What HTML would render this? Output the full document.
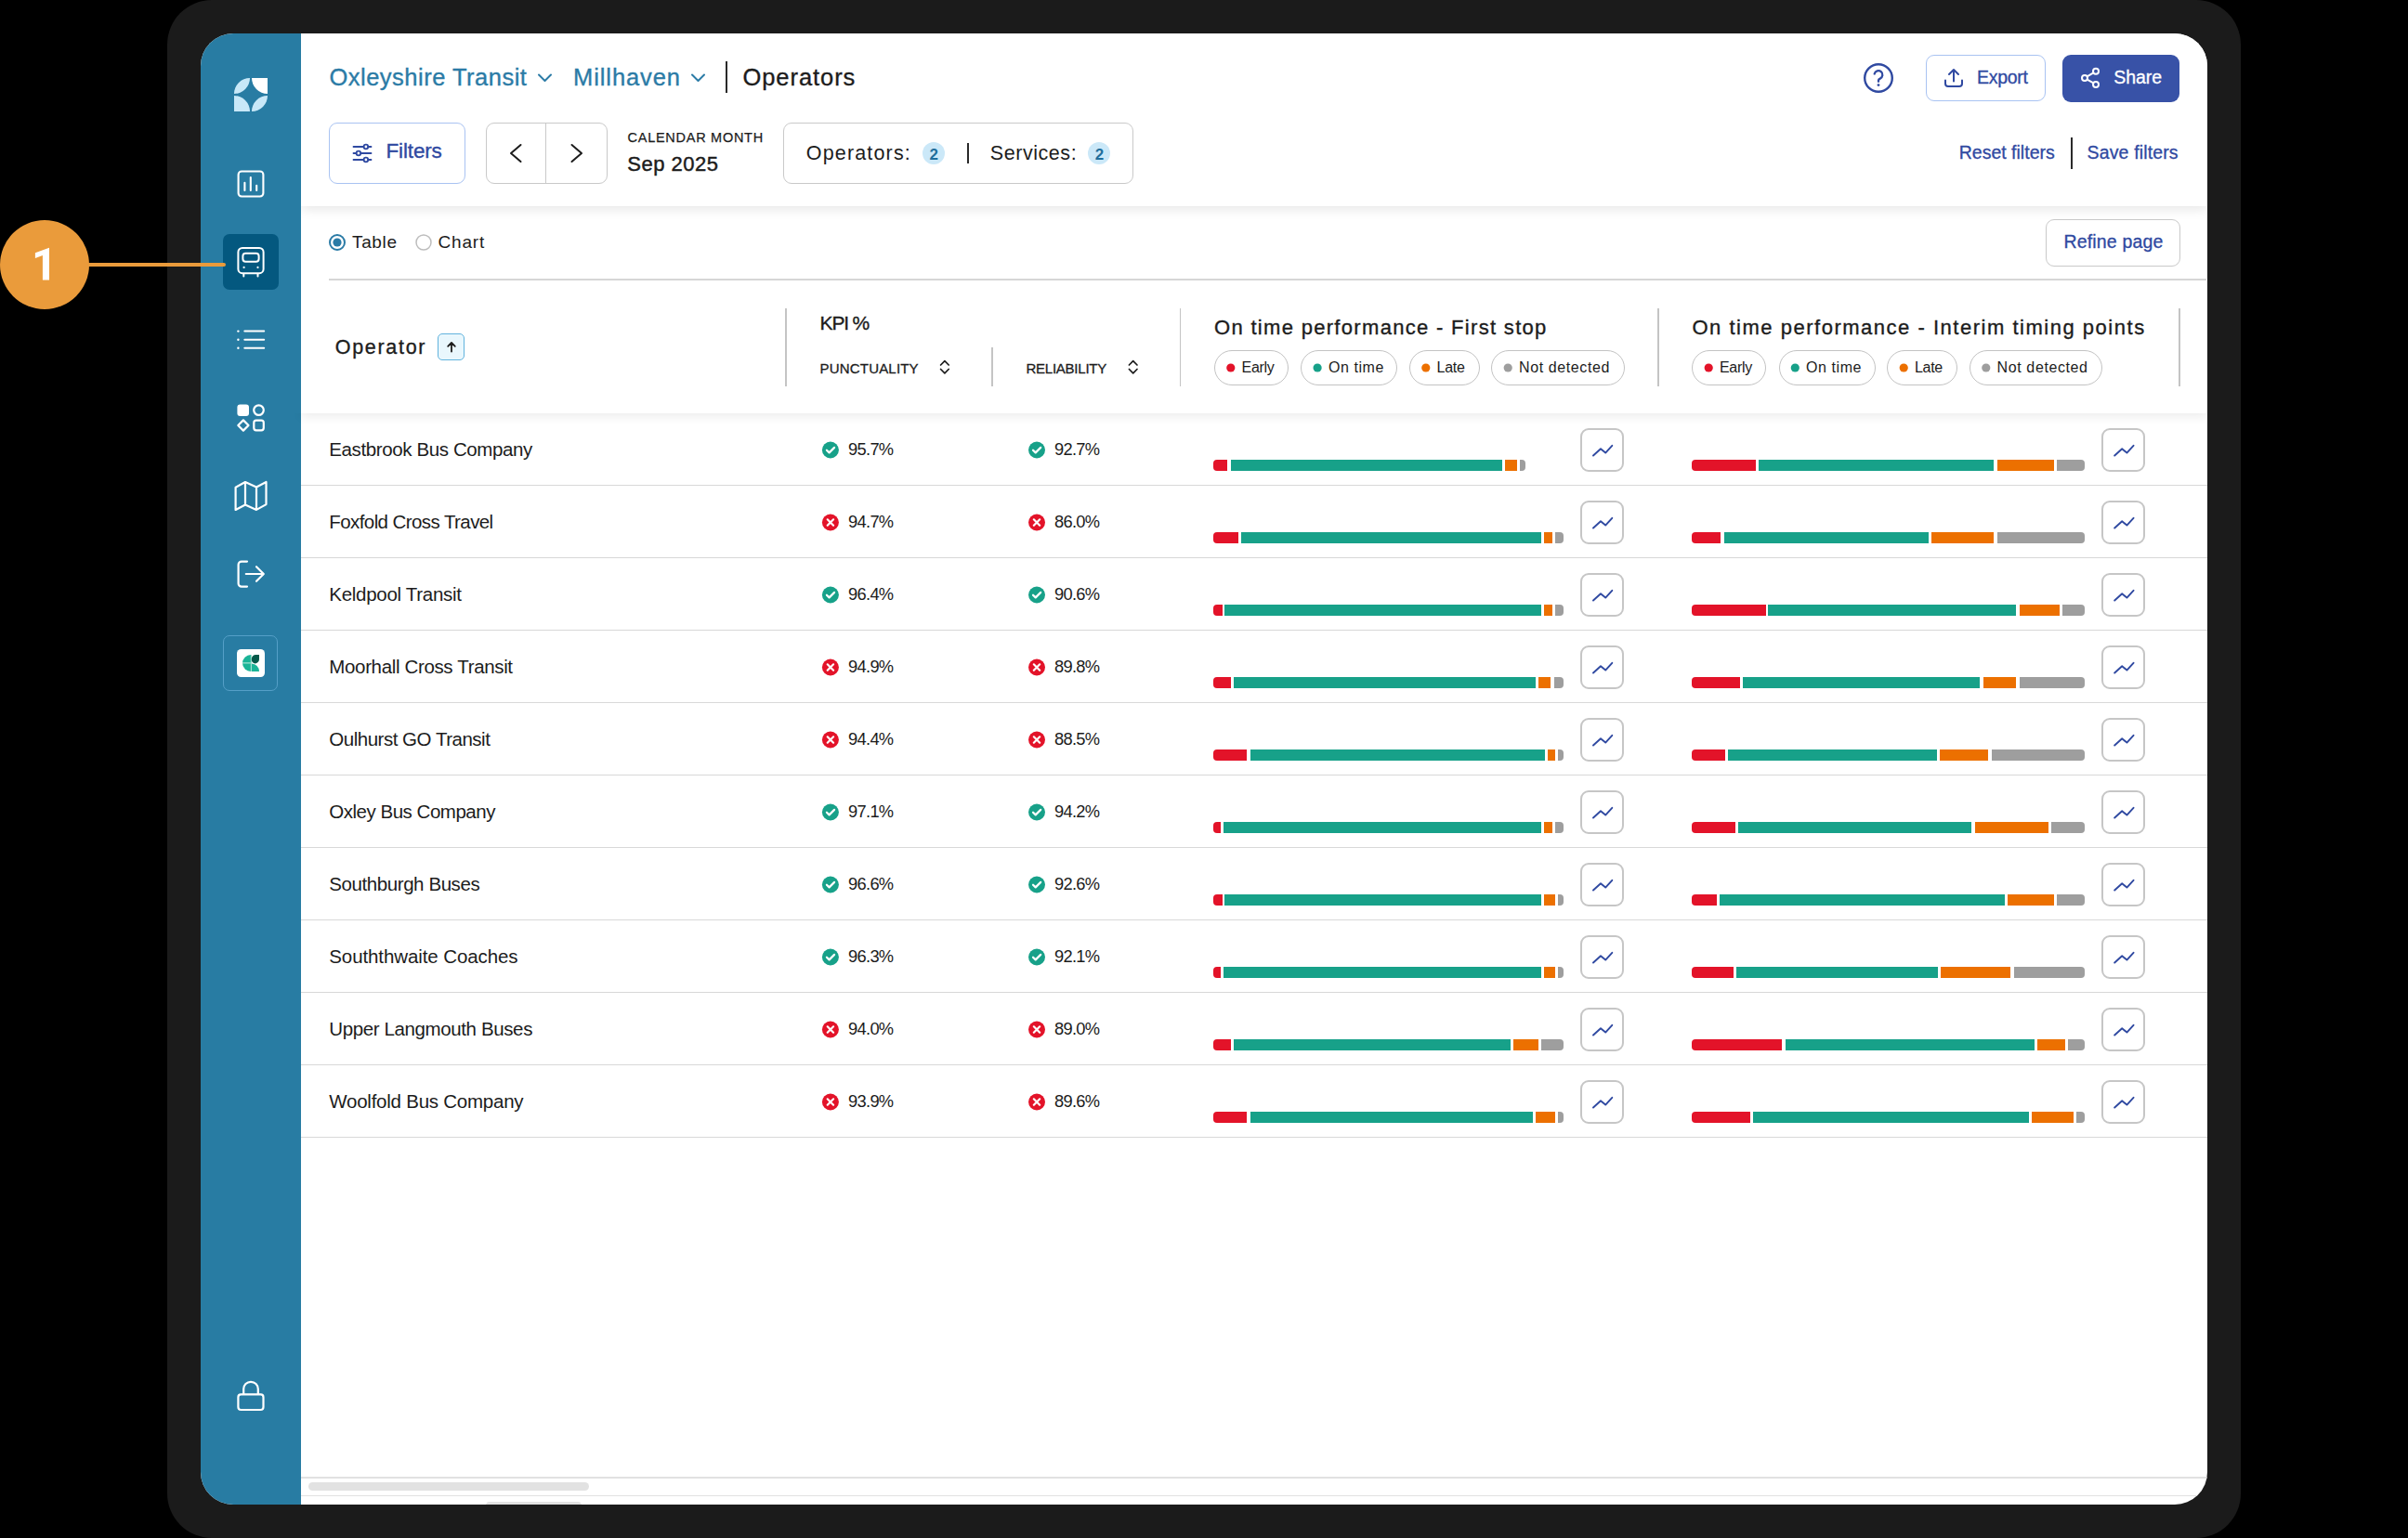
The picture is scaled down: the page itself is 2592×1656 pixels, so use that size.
<!DOCTYPE html><html><head><meta charset="utf-8"><title>Operators</title><style>
html,body{margin:0;padding:0;background:#000;}
body{width:2592px;height:1656px;overflow:hidden;position:relative;font-family:"Liberation Sans",sans-serif;}
.abs{position:absolute;}
.t{position:absolute;white-space:nowrap;font-family:"Liberation Sans",sans-serif;}
.b{position:absolute;}
#frame{position:absolute;left:180px;top:0;width:2232px;height:1656px;background:#1b1b1b;border-radius:48px;}
#screen{position:absolute;left:216px;top:36px;width:2160px;height:1584px;background:#fff;border-radius:35px;overflow:hidden;}
#inner{position:absolute;left:-216px;top:-36px;width:2592px;height:1656px;}
</style></head><body>
<div id="frame"></div>
<div id="screen"><div id="inner">
<div class="b" style="left:216px;top:36px;width:108px;height:1584px;background:#287ca3;"></div>
<div class="b" style="left:324px;top:36px;width:2052px;height:186px;background:#fff;box-shadow:0 3px 12px rgba(0,0,0,0.10);clip-path:inset(0 0 -40px 0);"></div>
<div class="b" style="left:354px;top:300px;width:2021px;height:1.5px;background:#d6d6d6;"></div>
<div class="b" style="left:324px;top:300px;width:2052px;height:145px;background:transparent;box-shadow:0 4px 10px rgba(0,0,0,0.07);clip-path:inset(145px -20px -30px -20px);"></div>
<div class="b" style="left:781.2px;top:66px;width:1.599999999999909px;height:34px;background:#2a2a2a;"></div>
<div class="b" style="left:2073px;top:58.5px;width:129px;height:50.5px;border:1.6px solid #a9c3f2;border-radius:9px;box-sizing:border-box;"></div>
<div class="b" style="left:2220px;top:58.5px;width:126px;height:51.0px;background:#3852a7;border-radius:9px;"></div>
<div class="b" style="left:354px;top:132px;width:147px;height:66px;border:1.6px solid #a9c3f2;border-radius:9px;box-sizing:border-box;"></div>
<div class="b" style="left:522.5px;top:132px;width:131.5px;height:66px;border:1.6px solid #c9c9c9;border-radius:9px;box-sizing:border-box;"></div>
<div class="b" style="left:586.5px;top:133px;width:1.6000000000000227px;height:64px;background:#c9c9c9;"></div>
<div class="b" style="left:843px;top:132px;width:376.5px;height:66px;border:1.6px solid #c9c9c9;border-radius:9px;box-sizing:border-box;"></div>
<div class="b" style="left:993px;top:153px;width:24px;height:24px;background:#cbe8f8;border-radius:50%;"></div>
<div class="b" style="left:1041.2px;top:154px;width:1.599999999999909px;height:22px;background:#2a2a2a;"></div>
<div class="b" style="left:1171.3px;top:153px;width:24.0px;height:24px;background:#cbe8f8;border-radius:50%;"></div>
<div class="b" style="left:2229.2px;top:148px;width:1.6000000000003638px;height:34px;background:#2a2a2a;"></div>
<div class="b" style="left:2202px;top:235.5px;width:145px;height:51.0px;border:1.6px solid #c9c9c9;border-radius:9px;box-sizing:border-box;"></div>
<div class="b" style="left:471.3px;top:358.8px;width:29.19999999999999px;height:29.19999999999999px;background:#e9f7fd;border:1.6px solid #62b3dd;border-radius:5px;box-sizing:border-box;"></div>
<div class="b" style="left:845.25px;top:331.5px;width:1.5px;height:84.10000000000002px;background:#c4c4c4;"></div>
<div class="b" style="left:1067.25px;top:373.5px;width:1.5px;height:42.10000000000002px;background:#c4c4c4;"></div>
<div class="b" style="left:1269.75px;top:331.5px;width:1.5px;height:84.10000000000002px;background:#c4c4c4;"></div>
<div class="b" style="left:1784.25px;top:331.5px;width:1.5px;height:84.10000000000002px;background:#c4c4c4;"></div>
<div class="b" style="left:2345.45px;top:331.5px;width:1.5px;height:84.10000000000002px;background:#c4c4c4;"></div>
<div class="b" style="left:1307px;top:377px;width:80px;height:38px;border:1.8px solid #c3c3c3;border-radius:19px;box-sizing:border-box;"></div>
<div class="b" style="left:1400.3px;top:377px;width:103.70000000000005px;height:38px;border:1.8px solid #c3c3c3;border-radius:19px;box-sizing:border-box;"></div>
<div class="b" style="left:1517px;top:377px;width:75.5px;height:38px;border:1.8px solid #c3c3c3;border-radius:19px;box-sizing:border-box;"></div>
<div class="b" style="left:1605.4px;top:377px;width:143.19999999999982px;height:38px;border:1.8px solid #c3c3c3;border-radius:19px;box-sizing:border-box;"></div>
<div class="b" style="left:1821.4px;top:377px;width:80.09999999999991px;height:38px;border:1.8px solid #c3c3c3;border-radius:19px;box-sizing:border-box;"></div>
<div class="b" style="left:1914.5px;top:377px;width:104.09999999999991px;height:38px;border:1.8px solid #c3c3c3;border-radius:19px;box-sizing:border-box;"></div>
<div class="b" style="left:2031.4px;top:377px;width:75.40000000000009px;height:38px;border:1.8px solid #c3c3c3;border-radius:19px;box-sizing:border-box;"></div>
<div class="b" style="left:2120px;top:377px;width:143px;height:38px;border:1.8px solid #c3c3c3;border-radius:19px;box-sizing:border-box;"></div>
<div class="b" style="left:1306.3px;top:495px;width:15.200000000000045px;height:12px;background:#e31329;border-radius:4px 0 0 4px;"></div>
<div class="b" style="left:1324.5px;top:495px;width:292.4000000000001px;height:12px;background:#17a189;"></div>
<div class="b" style="left:1620.1px;top:495px;width:13.200000000000045px;height:12px;background:#ec7000;"></div>
<div class="b" style="left:1636.2px;top:495px;width:6.2000000000000455px;height:12px;background:#9e9e9e;border-radius:0 4px 4px 0;"></div>
<div class="b" style="left:1821.1px;top:495px;width:68.90000000000009px;height:12px;background:#e31329;border-radius:4px 0 0 4px;"></div>
<div class="b" style="left:1892.9px;top:495px;width:253.5999999999999px;height:12px;background:#17a189;"></div>
<div class="b" style="left:2149.5px;top:495px;width:61.5px;height:12px;background:#ec7000;"></div>
<div class="b" style="left:2214.2px;top:495px;width:29.600000000000364px;height:12px;background:#9e9e9e;border-radius:0 4px 4px 0;"></div>
<div class="b" style="left:1701.2px;top:461px;width:47.0px;height:47px;border:2px solid #c6c6c6;border-radius:9px;box-sizing:border-box;"></div>
<div class="b" style="left:2262.4px;top:461px;width:47.0px;height:47px;border:2px solid #c6c6c6;border-radius:9px;box-sizing:border-box;"></div>
<div class="b" style="left:324px;top:522.1px;width:2052px;height:1.2999999999999545px;background:#d8d8d8;"></div>
<div class="b" style="left:1306.3px;top:573px;width:27.200000000000045px;height:12px;background:#e31329;border-radius:4px 0 0 4px;"></div>
<div class="b" style="left:1336.4px;top:573px;width:322.39999999999986px;height:12px;background:#17a189;"></div>
<div class="b" style="left:1662px;top:573px;width:9.099999999999909px;height:12px;background:#ec7000;"></div>
<div class="b" style="left:1674.1px;top:573px;width:8.600000000000136px;height:12px;background:#9e9e9e;border-radius:0 4px 4px 0;"></div>
<div class="b" style="left:1821.1px;top:573px;width:31.40000000000009px;height:12px;background:#e31329;border-radius:4px 0 0 4px;"></div>
<div class="b" style="left:1855.7px;top:573px;width:220.29999999999995px;height:12px;background:#17a189;"></div>
<div class="b" style="left:2079.1px;top:573px;width:67.40000000000009px;height:12px;background:#ec7000;"></div>
<div class="b" style="left:2149.5px;top:573px;width:94.30000000000018px;height:12px;background:#9e9e9e;border-radius:0 4px 4px 0;"></div>
<div class="b" style="left:1701.2px;top:539px;width:47.0px;height:47px;border:2px solid #c6c6c6;border-radius:9px;box-sizing:border-box;"></div>
<div class="b" style="left:2262.4px;top:539px;width:47.0px;height:47px;border:2px solid #c6c6c6;border-radius:9px;box-sizing:border-box;"></div>
<div class="b" style="left:324px;top:600.1px;width:2052px;height:1.2999999999999545px;background:#d8d8d8;"></div>
<div class="b" style="left:1306.3px;top:651px;width:9.299999999999955px;height:12px;background:#e31329;border-radius:4px 0 0 4px;"></div>
<div class="b" style="left:1318.4px;top:651px;width:340.5999999999999px;height:12px;background:#17a189;"></div>
<div class="b" style="left:1662px;top:651px;width:8.900000000000091px;height:12px;background:#ec7000;"></div>
<div class="b" style="left:1674px;top:651px;width:9px;height:12px;background:#9e9e9e;border-radius:0 4px 4px 0;"></div>
<div class="b" style="left:1821.2px;top:651px;width:79.39999999999986px;height:12px;background:#e31329;border-radius:4px 0 0 4px;"></div>
<div class="b" style="left:1903.4px;top:651px;width:266.9000000000001px;height:12px;background:#17a189;"></div>
<div class="b" style="left:2173.5px;top:651px;width:43.30000000000018px;height:12px;background:#ec7000;"></div>
<div class="b" style="left:2220.2px;top:651px;width:23.40000000000009px;height:12px;background:#9e9e9e;border-radius:0 4px 4px 0;"></div>
<div class="b" style="left:1701.2px;top:617px;width:47.0px;height:47px;border:2px solid #c6c6c6;border-radius:9px;box-sizing:border-box;"></div>
<div class="b" style="left:2262.4px;top:617px;width:47.0px;height:47px;border:2px solid #c6c6c6;border-radius:9px;box-sizing:border-box;"></div>
<div class="b" style="left:324px;top:678.1px;width:2052px;height:1.2999999999999545px;background:#d8d8d8;"></div>
<div class="b" style="left:1306.3px;top:729px;width:18.299999999999955px;height:12px;background:#e31329;border-radius:4px 0 0 4px;"></div>
<div class="b" style="left:1327.6px;top:729px;width:325.20000000000005px;height:12px;background:#17a189;"></div>
<div class="b" style="left:1656px;top:729px;width:13.400000000000091px;height:12px;background:#ec7000;"></div>
<div class="b" style="left:1672.6px;top:729px;width:10.400000000000091px;height:12px;background:#9e9e9e;border-radius:0 4px 4px 0;"></div>
<div class="b" style="left:1821.2px;top:729px;width:52.299999999999955px;height:12px;background:#e31329;border-radius:4px 0 0 4px;"></div>
<div class="b" style="left:1876.3px;top:729px;width:255.10000000000014px;height:12px;background:#17a189;"></div>
<div class="b" style="left:2134.6px;top:729px;width:35.70000000000027px;height:12px;background:#ec7000;"></div>
<div class="b" style="left:2173.5px;top:729px;width:70.09999999999991px;height:12px;background:#9e9e9e;border-radius:0 4px 4px 0;"></div>
<div class="b" style="left:1701.2px;top:695px;width:47.0px;height:47px;border:2px solid #c6c6c6;border-radius:9px;box-sizing:border-box;"></div>
<div class="b" style="left:2262.4px;top:695px;width:47.0px;height:47px;border:2px solid #c6c6c6;border-radius:9px;box-sizing:border-box;"></div>
<div class="b" style="left:324px;top:756.1px;width:2052px;height:1.2999999999999545px;background:#d8d8d8;"></div>
<div class="b" style="left:1306.3px;top:807px;width:36.200000000000045px;height:12px;background:#e31329;border-radius:4px 0 0 4px;"></div>
<div class="b" style="left:1345.5px;top:807px;width:317.9000000000001px;height:12px;background:#17a189;"></div>
<div class="b" style="left:1666.4px;top:807px;width:7.5px;height:12px;background:#ec7000;"></div>
<div class="b" style="left:1676.9px;top:807px;width:6.099999999999909px;height:12px;background:#9e9e9e;border-radius:0 4px 4px 0;"></div>
<div class="b" style="left:1821.2px;top:807px;width:35.5px;height:12px;background:#e31329;border-radius:4px 0 0 4px;"></div>
<div class="b" style="left:1860px;top:807px;width:224.69999999999982px;height:12px;background:#17a189;"></div>
<div class="b" style="left:2088px;top:807px;width:52.40000000000009px;height:12px;background:#ec7000;"></div>
<div class="b" style="left:2143.6px;top:807px;width:100.0px;height:12px;background:#9e9e9e;border-radius:0 4px 4px 0;"></div>
<div class="b" style="left:1701.2px;top:773px;width:47.0px;height:47px;border:2px solid #c6c6c6;border-radius:9px;box-sizing:border-box;"></div>
<div class="b" style="left:2262.4px;top:773px;width:47.0px;height:47px;border:2px solid #c6c6c6;border-radius:9px;box-sizing:border-box;"></div>
<div class="b" style="left:324px;top:834.1px;width:2052px;height:1.2999999999999545px;background:#d8d8d8;"></div>
<div class="b" style="left:1306.3px;top:885px;width:7.600000000000136px;height:12px;background:#e31329;border-radius:4px 0 0 4px;"></div>
<div class="b" style="left:1317.1px;top:885px;width:341.9000000000001px;height:12px;background:#17a189;"></div>
<div class="b" style="left:1662px;top:885px;width:9px;height:12px;background:#ec7000;"></div>
<div class="b" style="left:1674px;top:885px;width:9px;height:12px;background:#9e9e9e;border-radius:0 4px 4px 0;"></div>
<div class="b" style="left:1821.2px;top:885px;width:46.399999999999864px;height:12px;background:#e31329;border-radius:4px 0 0 4px;"></div>
<div class="b" style="left:1870.7px;top:885px;width:251.79999999999995px;height:12px;background:#17a189;"></div>
<div class="b" style="left:2125.5px;top:885px;width:79.40000000000009px;height:12px;background:#ec7000;"></div>
<div class="b" style="left:2208px;top:885px;width:35.59999999999991px;height:12px;background:#9e9e9e;border-radius:0 4px 4px 0;"></div>
<div class="b" style="left:1701.2px;top:851px;width:47.0px;height:47px;border:2px solid #c6c6c6;border-radius:9px;box-sizing:border-box;"></div>
<div class="b" style="left:2262.4px;top:851px;width:47.0px;height:47px;border:2px solid #c6c6c6;border-radius:9px;box-sizing:border-box;"></div>
<div class="b" style="left:324px;top:912.1px;width:2052px;height:1.2999999999999545px;background:#d8d8d8;"></div>
<div class="b" style="left:1306.3px;top:963px;width:9.299999999999955px;height:12px;background:#e31329;border-radius:4px 0 0 4px;"></div>
<div class="b" style="left:1318.4px;top:963px;width:340.5999999999999px;height:12px;background:#17a189;"></div>
<div class="b" style="left:1662px;top:963px;width:11.900000000000091px;height:12px;background:#ec7000;"></div>
<div class="b" style="left:1676.9px;top:963px;width:6.099999999999909px;height:12px;background:#9e9e9e;border-radius:0 4px 4px 0;"></div>
<div class="b" style="left:1821.2px;top:963px;width:26.799999999999955px;height:12px;background:#e31329;border-radius:4px 0 0 4px;"></div>
<div class="b" style="left:1851.1px;top:963px;width:307.4000000000001px;height:12px;background:#17a189;"></div>
<div class="b" style="left:2161.3px;top:963px;width:49.59999999999991px;height:12px;background:#ec7000;"></div>
<div class="b" style="left:2214px;top:963px;width:29.59999999999991px;height:12px;background:#9e9e9e;border-radius:0 4px 4px 0;"></div>
<div class="b" style="left:1701.2px;top:929px;width:47.0px;height:47px;border:2px solid #c6c6c6;border-radius:9px;box-sizing:border-box;"></div>
<div class="b" style="left:2262.4px;top:929px;width:47.0px;height:47px;border:2px solid #c6c6c6;border-radius:9px;box-sizing:border-box;"></div>
<div class="b" style="left:324px;top:990.1px;width:2052px;height:1.2999999999999545px;background:#d8d8d8;"></div>
<div class="b" style="left:1306.3px;top:1041px;width:7.600000000000136px;height:12px;background:#e31329;border-radius:4px 0 0 4px;"></div>
<div class="b" style="left:1317.1px;top:1041px;width:341.9000000000001px;height:12px;background:#17a189;"></div>
<div class="b" style="left:1662px;top:1041px;width:11.900000000000091px;height:12px;background:#ec7000;"></div>
<div class="b" style="left:1676.9px;top:1041px;width:6.099999999999909px;height:12px;background:#9e9e9e;border-radius:0 4px 4px 0;"></div>
<div class="b" style="left:1821.2px;top:1041px;width:44.5px;height:12px;background:#e31329;border-radius:4px 0 0 4px;"></div>
<div class="b" style="left:1869px;top:1041px;width:217.19999999999982px;height:12px;background:#17a189;"></div>
<div class="b" style="left:2089.4px;top:1041px;width:75.09999999999991px;height:12px;background:#ec7000;"></div>
<div class="b" style="left:2167.5px;top:1041px;width:76.09999999999991px;height:12px;background:#9e9e9e;border-radius:0 4px 4px 0;"></div>
<div class="b" style="left:1701.2px;top:1007px;width:47.0px;height:47px;border:2px solid #c6c6c6;border-radius:9px;box-sizing:border-box;"></div>
<div class="b" style="left:2262.4px;top:1007px;width:47.0px;height:47px;border:2px solid #c6c6c6;border-radius:9px;box-sizing:border-box;"></div>
<div class="b" style="left:324px;top:1068.1px;width:2052px;height:1.300000000000182px;background:#d8d8d8;"></div>
<div class="b" style="left:1306.3px;top:1119px;width:18.299999999999955px;height:12px;background:#e31329;border-radius:4px 0 0 4px;"></div>
<div class="b" style="left:1327.6px;top:1119px;width:298.10000000000014px;height:12px;background:#17a189;"></div>
<div class="b" style="left:1629px;top:1119px;width:27px;height:12px;background:#ec7000;"></div>
<div class="b" style="left:1659px;top:1119px;width:24px;height:12px;background:#9e9e9e;border-radius:0 4px 4px 0;"></div>
<div class="b" style="left:1821.2px;top:1119px;width:97.20000000000005px;height:12px;background:#e31329;border-radius:4px 0 0 4px;"></div>
<div class="b" style="left:1921.6px;top:1119px;width:268.3000000000002px;height:12px;background:#17a189;"></div>
<div class="b" style="left:2193.1px;top:1119px;width:29.90000000000009px;height:12px;background:#ec7000;"></div>
<div class="b" style="left:2226.2px;top:1119px;width:17.40000000000009px;height:12px;background:#9e9e9e;border-radius:0 4px 4px 0;"></div>
<div class="b" style="left:1701.2px;top:1085px;width:47.0px;height:47px;border:2px solid #c6c6c6;border-radius:9px;box-sizing:border-box;"></div>
<div class="b" style="left:2262.4px;top:1085px;width:47.0px;height:47px;border:2px solid #c6c6c6;border-radius:9px;box-sizing:border-box;"></div>
<div class="b" style="left:324px;top:1146.1px;width:2052px;height:1.300000000000182px;background:#d8d8d8;"></div>
<div class="b" style="left:1306.3px;top:1197px;width:36.200000000000045px;height:12px;background:#e31329;border-radius:4px 0 0 4px;"></div>
<div class="b" style="left:1345.5px;top:1197px;width:304.29999999999995px;height:12px;background:#17a189;"></div>
<div class="b" style="left:1652.8px;top:1197px;width:21.100000000000136px;height:12px;background:#ec7000;"></div>
<div class="b" style="left:1676.9px;top:1197px;width:6.099999999999909px;height:12px;background:#9e9e9e;border-radius:0 4px 4px 0;"></div>
<div class="b" style="left:1821.2px;top:1197px;width:62.59999999999991px;height:12px;background:#e31329;border-radius:4px 0 0 4px;"></div>
<div class="b" style="left:1887px;top:1197px;width:296.8000000000002px;height:12px;background:#17a189;"></div>
<div class="b" style="left:2187.1px;top:1197px;width:44.70000000000027px;height:12px;background:#ec7000;"></div>
<div class="b" style="left:2235.2px;top:1197px;width:8.400000000000091px;height:12px;background:#9e9e9e;border-radius:0 4px 4px 0;"></div>
<div class="b" style="left:1701.2px;top:1163px;width:47.0px;height:47px;border:2px solid #c6c6c6;border-radius:9px;box-sizing:border-box;"></div>
<div class="b" style="left:2262.4px;top:1163px;width:47.0px;height:47px;border:2px solid #c6c6c6;border-radius:9px;box-sizing:border-box;"></div>
<div class="b" style="left:324px;top:1224.1px;width:2052px;height:1.300000000000182px;background:#d8d8d8;"></div>
<div class="b" style="left:324px;top:1590px;width:2052px;height:1.5px;background:#e2e2e2;"></div>
<div class="b" style="left:332px;top:1596px;width:302px;height:9px;background:#e2e2e2;border-radius:5px;"></div>
<div class="b" style="left:324px;top:1609.5px;width:2052px;height:1.5px;background:#e2e2e2;"></div>
<div class="b" style="left:523px;top:1617px;width:103px;height:8px;background:#e2e2e2;border-radius:5px;"></div>
<div class="b" style="left:240px;top:252px;width:60px;height:60px;background:#04587f;border-radius:7px;"></div>
<div class="b" style="left:240.3px;top:684px;width:59.19999999999999px;height:59.5px;border:1.8px solid #559fc7;border-radius:7px;box-sizing:border-box;"></div>
<div class="b" style="left:255px;top:699px;width:30px;height:30px;background:#fff;border-radius:4.5px;"></div>
<svg class="abs" style="left:0;top:0" width="2592" height="1656" viewBox="0 0 2592 1656"><g><path d="M252,101 A17,17 0 0 1 269,84 A17,17 0 0 1 252,101 Z" fill="#c8e8f8"/><path d="M271,84 H288 V101 A17,17 0 0 1 271,84 Z" fill="#ffffff"/><path d="M252,103 A17,17 0 0 1 269,120 H252 Z" fill="#c8e8f8"/><path d="M271,120 A17,17 0 0 1 288,103 A17,17 0 0 1 271,120 Z" fill="#c8e8f8"/></g>
<g fill="none" stroke="#ffffff" stroke-width="2.1" stroke-linecap="round"><rect x="256.6" y="184.5" width="26.8" height="27" rx="3.5"/><path d="M263.4,196.8 V205 M269.8,191 V205 M276.2,199.7 V205"/></g>
<g fill="none" stroke="#ffffff" stroke-width="2" stroke-linecap="round"><rect x="256.4" y="267" width="27.2" height="27.2" rx="4.5"/><rect x="261.4" y="272.8" width="17.2" height="9" rx="3"/><path d="M262.3,295 V297.6 M277.5,295 V297.6"/></g><circle cx="262.6" cy="287.9" r="1.1" fill="#ffffff"/><circle cx="277.5" cy="287.9" r="1.1" fill="#ffffff"/>
<g stroke="#ffffff" stroke-width="2" stroke-linecap="round"><path d="M263.3,356.6 H284.2 M263.3,365.8 H284.2 M263.3,374.8 H284.2"/></g><g fill="#ffffff"><circle cx="256.4" cy="356.6" r="1.2"/><circle cx="256.4" cy="365.8" r="1.2"/><circle cx="256.4" cy="374.8" r="1.2"/></g>
<rect x="255.4" y="435.4" width="12.6" height="12.6" rx="3" fill="#ffffff"/><g fill="none" stroke="#ffffff" stroke-width="2.2" stroke-linejoin="round"><circle cx="278.5" cy="441.6" r="5.3"/><path d="M261.9,452.4 L267.5,458 L261.9,463.6 L256.3,458 Z"/><rect x="273.3" y="452.7" width="10.5" height="10.6" rx="2.5"/></g>
<g fill="none" stroke="#ffffff" stroke-width="2.2" stroke-linejoin="round"><path d="M253.6,524.7 L264,519 L276,524.4 L286.5,519 V543.1 L276,548.9 L264,543.6 L253.6,548.9 Z M264,519 V543.6 M276,524.4 V548.9"/></g>
<g fill="none" stroke="#ffffff" stroke-width="2.2" stroke-linecap="round" stroke-linejoin="round"><path d="M266,604.6 H260 A3.4,3.4 0 0 0 256.6,608 V628.2 A3.4,3.4 0 0 0 260,631.6 H266"/><path d="M264.8,618 H283.6 M276,610.2 L283.8,618 L276,625.8"/></g>
<path d="M270,705 A9,9 0 0 0 270,723 Z" fill="#1ab497"/><path d="M270.8,714.5 V723 H279 A8.5,8.5 0 0 0 270.8,714.5 Z" fill="#1ab497"/><path d="M261,713.8 H270.8 M270.4,705 V723" stroke="#9edfcf" stroke-width="1.2"/><path d="M279,705 V710 A4.5,4.5 0 0 1 274.5,714.4 A4.5,4.5 0 0 1 270.8,709.6 A4.6,4.6 0 0 1 275.4,705 Z" fill="#04594a"/>
<g fill="none" stroke="#ffffff" stroke-width="2.2"><rect x="256.4" y="1501.4" width="27.1" height="16.6" rx="3"/><path d="M262.2,1501.4 V1495.6 A7.8,7.8 0 0 1 277.8,1495.6 V1501.4"/></g>
<polyline points="580,80.5 586.5,87 593,80.5" fill="none" stroke="#2b7ba6" stroke-width="2" stroke-linecap="round" stroke-linejoin="round"/>
<polyline points="745,80.5 751.5,87 758,80.5" fill="none" stroke="#2b7ba6" stroke-width="2" stroke-linecap="round" stroke-linejoin="round"/>
<circle cx="2022" cy="84" r="14.8" fill="none" stroke="#2f49a1" stroke-width="2.4"/>
<path d="M2017.7,79.5 A4.4,4.4 0 1 1 2023.8,84.6 Q2022,85.4 2022,86.6 V87.8" fill="none" stroke="#2f49a1" stroke-width="2.3" stroke-linecap="round" stroke-linejoin="round"/>
<circle cx="2022" cy="91.6" r="1.4" fill="#2f49a1"/>
<path d="M2094,86.5 v3.5 a3,3 0 0 0 3,3 h12 a3,3 0 0 0 3,-3 v-3.5" fill="none" stroke="#2f49a1" stroke-width="2" stroke-linecap="round"/>
<path d="M2103,87.5 V75 M2098,80 L2103,75 L2108,80" fill="none" stroke="#2f49a1" stroke-width="2" stroke-linecap="round" stroke-linejoin="round"/>
<g fill="none" stroke="#fff" stroke-width="2"><circle cx="2256" cy="76.8" r="3"/><circle cx="2244" cy="84" r="3"/><circle cx="2256" cy="91" r="3"/><path d="M2246.6,82.4 L2253.4,78.4 M2246.6,85.6 L2253.4,89.4"/></g>
<g fill="none" stroke="#2f49a1" stroke-width="1.8" stroke-linecap="round"><path d="M380.5,158 H391.4 M396.4,158 H399.5 M380.5,165 H383.4 M388.4,165 H399.5 M380.5,172 H391.4 M396.4,172 H399.5"/><circle cx="393.9" cy="158" r="2.3"/><circle cx="385.9" cy="165" r="2.3"/><circle cx="393.9" cy="172" r="2.3"/></g>
<polyline points="560.5,156 550,165 560.5,174" fill="none" stroke="#1c1c1c" stroke-width="2" stroke-linecap="round" stroke-linejoin="round"/>
<polyline points="615.5,156 626,165 615.5,174" fill="none" stroke="#1c1c1c" stroke-width="2" stroke-linecap="round" stroke-linejoin="round"/>
<circle cx="363" cy="261" r="8" fill="none" stroke="#2b7ba6" stroke-width="2"/><circle cx="363" cy="261" r="4.6" fill="#2b7ba6"/>
<circle cx="456" cy="261" r="8" fill="none" stroke="#bdbdbd" stroke-width="1.5"/>
<path d="M486,378.5 V369.5 M482.2,372.8 L486,369 L489.8,372.8" fill="none" stroke="#1c1c1c" stroke-width="1.8" stroke-linecap="round" stroke-linejoin="round"/>
<path d="M1012.6,393 L1016.9,388.7 L1021.1999999999999,393 M1012.6,397.5 L1016.9,401.8 L1021.1999999999999,397.5" fill="none" stroke="#1c1c1c" stroke-width="1.7" stroke-linecap="round" stroke-linejoin="round"/>
<path d="M1215.4,393 L1219.7,388.7 L1224.0,393 M1215.4,397.5 L1219.7,401.8 L1224.0,397.5" fill="none" stroke="#1c1c1c" stroke-width="1.7" stroke-linecap="round" stroke-linejoin="round"/>
<circle cx="1324.8" cy="396" r="4.6" fill="#e31329"/>
<circle cx="1418.1" cy="396" r="4.6" fill="#17a189"/>
<circle cx="1534.8" cy="396" r="4.6" fill="#ec7000"/>
<circle cx="1623.2" cy="396" r="4.6" fill="#9e9e9e"/>
<circle cx="1839.2" cy="396" r="4.6" fill="#e31329"/>
<circle cx="1932.3" cy="396" r="4.6" fill="#17a189"/>
<circle cx="2049.2000000000003" cy="396" r="4.6" fill="#ec7000"/>
<circle cx="2137.8" cy="396" r="4.6" fill="#9e9e9e"/>
<circle cx="893.9" cy="484.5" r="9" fill="#17a189"/><polyline points="889.9,484.7 892.6,487.4 898.1,481.9" fill="none" stroke="#fff" stroke-width="2.2" stroke-linecap="round" stroke-linejoin="round"/>
<circle cx="1116" cy="484.5" r="9" fill="#17a189"/><polyline points="1112,484.7 1114.7,487.4 1120.2,481.9" fill="none" stroke="#fff" stroke-width="2.2" stroke-linecap="round" stroke-linejoin="round"/>
<polyline points="1715.0,490.5 1723.0,483.3 1728.2,487.6 1735.3,479.8" fill="none" stroke="#2f49a1" stroke-width="1.9" stroke-linecap="round" stroke-linejoin="round"/>
<polyline points="2276.2000000000003,490.5 2284.2000000000003,483.3 2289.4,487.6 2296.5000000000005,479.8" fill="none" stroke="#2f49a1" stroke-width="1.9" stroke-linecap="round" stroke-linejoin="round"/>
<circle cx="893.9" cy="562.5" r="9" fill="#e31329"/><path d="M890.6999999999999,559.3 L897.1,565.7 M897.1,559.3 L890.6999999999999,565.7" fill="none" stroke="#fff" stroke-width="2.2" stroke-linecap="round"/>
<circle cx="1116" cy="562.5" r="9" fill="#e31329"/><path d="M1112.8,559.3 L1119.2,565.7 M1119.2,559.3 L1112.8,565.7" fill="none" stroke="#fff" stroke-width="2.2" stroke-linecap="round"/>
<polyline points="1715.0,568.5 1723.0,561.3 1728.2,565.5999999999999 1735.3,557.8" fill="none" stroke="#2f49a1" stroke-width="1.9" stroke-linecap="round" stroke-linejoin="round"/>
<polyline points="2276.2000000000003,568.5 2284.2000000000003,561.3 2289.4,565.5999999999999 2296.5000000000005,557.8" fill="none" stroke="#2f49a1" stroke-width="1.9" stroke-linecap="round" stroke-linejoin="round"/>
<circle cx="893.9" cy="640.5" r="9" fill="#17a189"/><polyline points="889.9,640.7 892.6,643.4 898.1,637.9" fill="none" stroke="#fff" stroke-width="2.2" stroke-linecap="round" stroke-linejoin="round"/>
<circle cx="1116" cy="640.5" r="9" fill="#17a189"/><polyline points="1112,640.7 1114.7,643.4 1120.2,637.9" fill="none" stroke="#fff" stroke-width="2.2" stroke-linecap="round" stroke-linejoin="round"/>
<polyline points="1715.0,646.5 1723.0,639.3 1728.2,643.5999999999999 1735.3,635.8" fill="none" stroke="#2f49a1" stroke-width="1.9" stroke-linecap="round" stroke-linejoin="round"/>
<polyline points="2276.2000000000003,646.5 2284.2000000000003,639.3 2289.4,643.5999999999999 2296.5000000000005,635.8" fill="none" stroke="#2f49a1" stroke-width="1.9" stroke-linecap="round" stroke-linejoin="round"/>
<circle cx="893.9" cy="718.5" r="9" fill="#e31329"/><path d="M890.6999999999999,715.3 L897.1,721.7 M897.1,715.3 L890.6999999999999,721.7" fill="none" stroke="#fff" stroke-width="2.2" stroke-linecap="round"/>
<circle cx="1116" cy="718.5" r="9" fill="#e31329"/><path d="M1112.8,715.3 L1119.2,721.7 M1119.2,715.3 L1112.8,721.7" fill="none" stroke="#fff" stroke-width="2.2" stroke-linecap="round"/>
<polyline points="1715.0,724.5 1723.0,717.3 1728.2,721.5999999999999 1735.3,713.8" fill="none" stroke="#2f49a1" stroke-width="1.9" stroke-linecap="round" stroke-linejoin="round"/>
<polyline points="2276.2000000000003,724.5 2284.2000000000003,717.3 2289.4,721.5999999999999 2296.5000000000005,713.8" fill="none" stroke="#2f49a1" stroke-width="1.9" stroke-linecap="round" stroke-linejoin="round"/>
<circle cx="893.9" cy="796.5" r="9" fill="#e31329"/><path d="M890.6999999999999,793.3 L897.1,799.7 M897.1,793.3 L890.6999999999999,799.7" fill="none" stroke="#fff" stroke-width="2.2" stroke-linecap="round"/>
<circle cx="1116" cy="796.5" r="9" fill="#e31329"/><path d="M1112.8,793.3 L1119.2,799.7 M1119.2,793.3 L1112.8,799.7" fill="none" stroke="#fff" stroke-width="2.2" stroke-linecap="round"/>
<polyline points="1715.0,802.5 1723.0,795.3 1728.2,799.5999999999999 1735.3,791.8" fill="none" stroke="#2f49a1" stroke-width="1.9" stroke-linecap="round" stroke-linejoin="round"/>
<polyline points="2276.2000000000003,802.5 2284.2000000000003,795.3 2289.4,799.5999999999999 2296.5000000000005,791.8" fill="none" stroke="#2f49a1" stroke-width="1.9" stroke-linecap="round" stroke-linejoin="round"/>
<circle cx="893.9" cy="874.5" r="9" fill="#17a189"/><polyline points="889.9,874.7 892.6,877.4 898.1,871.9" fill="none" stroke="#fff" stroke-width="2.2" stroke-linecap="round" stroke-linejoin="round"/>
<circle cx="1116" cy="874.5" r="9" fill="#17a189"/><polyline points="1112,874.7 1114.7,877.4 1120.2,871.9" fill="none" stroke="#fff" stroke-width="2.2" stroke-linecap="round" stroke-linejoin="round"/>
<polyline points="1715.0,880.5 1723.0,873.3 1728.2,877.5999999999999 1735.3,869.8" fill="none" stroke="#2f49a1" stroke-width="1.9" stroke-linecap="round" stroke-linejoin="round"/>
<polyline points="2276.2000000000003,880.5 2284.2000000000003,873.3 2289.4,877.5999999999999 2296.5000000000005,869.8" fill="none" stroke="#2f49a1" stroke-width="1.9" stroke-linecap="round" stroke-linejoin="round"/>
<circle cx="893.9" cy="952.5" r="9" fill="#17a189"/><polyline points="889.9,952.7 892.6,955.4 898.1,949.9" fill="none" stroke="#fff" stroke-width="2.2" stroke-linecap="round" stroke-linejoin="round"/>
<circle cx="1116" cy="952.5" r="9" fill="#17a189"/><polyline points="1112,952.7 1114.7,955.4 1120.2,949.9" fill="none" stroke="#fff" stroke-width="2.2" stroke-linecap="round" stroke-linejoin="round"/>
<polyline points="1715.0,958.5 1723.0,951.3 1728.2,955.5999999999999 1735.3,947.8" fill="none" stroke="#2f49a1" stroke-width="1.9" stroke-linecap="round" stroke-linejoin="round"/>
<polyline points="2276.2000000000003,958.5 2284.2000000000003,951.3 2289.4,955.5999999999999 2296.5000000000005,947.8" fill="none" stroke="#2f49a1" stroke-width="1.9" stroke-linecap="round" stroke-linejoin="round"/>
<circle cx="893.9" cy="1030.5" r="9" fill="#17a189"/><polyline points="889.9,1030.7 892.6,1033.4 898.1,1027.9" fill="none" stroke="#fff" stroke-width="2.2" stroke-linecap="round" stroke-linejoin="round"/>
<circle cx="1116" cy="1030.5" r="9" fill="#17a189"/><polyline points="1112,1030.7 1114.7,1033.4 1120.2,1027.9" fill="none" stroke="#fff" stroke-width="2.2" stroke-linecap="round" stroke-linejoin="round"/>
<polyline points="1715.0,1036.5 1723.0,1029.3 1728.2,1033.6 1735.3,1025.8" fill="none" stroke="#2f49a1" stroke-width="1.9" stroke-linecap="round" stroke-linejoin="round"/>
<polyline points="2276.2000000000003,1036.5 2284.2000000000003,1029.3 2289.4,1033.6 2296.5000000000005,1025.8" fill="none" stroke="#2f49a1" stroke-width="1.9" stroke-linecap="round" stroke-linejoin="round"/>
<circle cx="893.9" cy="1108.5" r="9" fill="#e31329"/><path d="M890.6999999999999,1105.3 L897.1,1111.7 M897.1,1105.3 L890.6999999999999,1111.7" fill="none" stroke="#fff" stroke-width="2.2" stroke-linecap="round"/>
<circle cx="1116" cy="1108.5" r="9" fill="#e31329"/><path d="M1112.8,1105.3 L1119.2,1111.7 M1119.2,1105.3 L1112.8,1111.7" fill="none" stroke="#fff" stroke-width="2.2" stroke-linecap="round"/>
<polyline points="1715.0,1114.5 1723.0,1107.3 1728.2,1111.6 1735.3,1103.8" fill="none" stroke="#2f49a1" stroke-width="1.9" stroke-linecap="round" stroke-linejoin="round"/>
<polyline points="2276.2000000000003,1114.5 2284.2000000000003,1107.3 2289.4,1111.6 2296.5000000000005,1103.8" fill="none" stroke="#2f49a1" stroke-width="1.9" stroke-linecap="round" stroke-linejoin="round"/>
<circle cx="893.9" cy="1186.5" r="9" fill="#e31329"/><path d="M890.6999999999999,1183.3 L897.1,1189.7 M897.1,1183.3 L890.6999999999999,1189.7" fill="none" stroke="#fff" stroke-width="2.2" stroke-linecap="round"/>
<circle cx="1116" cy="1186.5" r="9" fill="#e31329"/><path d="M1112.8,1183.3 L1119.2,1189.7 M1119.2,1183.3 L1112.8,1189.7" fill="none" stroke="#fff" stroke-width="2.2" stroke-linecap="round"/>
<polyline points="1715.0,1192.5 1723.0,1185.3 1728.2,1189.6 1735.3,1181.8" fill="none" stroke="#2f49a1" stroke-width="1.9" stroke-linecap="round" stroke-linejoin="round"/>
<polyline points="2276.2000000000003,1192.5 2284.2000000000003,1185.3 2289.4,1189.6 2296.5000000000005,1181.8" fill="none" stroke="#2f49a1" stroke-width="1.9" stroke-linecap="round" stroke-linejoin="round"/></svg>
<div class="t" style="left:354.40px;top:71.21px;font-size:25.5px;line-height:25.5px;color:#2b7ba6;letter-spacing:0.500px;-webkit-text-stroke:0.35px #2b7ba6;">Oxleyshire Transit</div>
<div class="t" style="left:617.00px;top:71.21px;font-size:25.5px;line-height:25.5px;color:#2b7ba6;letter-spacing:0.912px;-webkit-text-stroke:0.35px #2b7ba6;">Millhaven</div>
<div class="t" style="left:799.40px;top:70.91px;font-size:25.5px;line-height:25.5px;color:#1c1c1c;letter-spacing:0.950px;-webkit-text-stroke:0.35px #1c1c1c;">Operators</div>
<div class="t" style="left:2128.00px;top:73.89px;font-size:19.5px;line-height:19.5px;color:#2f49a1;letter-spacing:-0.280px;-webkit-text-stroke:0.3px #2f49a1;">Export</div>
<div class="t" style="left:2275.30px;top:73.89px;font-size:19.5px;line-height:19.5px;color:#ffffff;letter-spacing:-0.075px;-webkit-text-stroke:0.3px #ffffff;">Share</div>
<div class="t" style="left:415.50px;top:152.35px;font-size:22.5px;line-height:22.5px;color:#2f49a1;letter-spacing:-0.150px;-webkit-text-stroke:0.35px #2f49a1;">Filters</div>
<div class="t" style="left:675.60px;top:140.93px;font-size:14.5px;line-height:14.5px;color:#1c1c1c;letter-spacing:0.723px;-webkit-text-stroke:0.25px #1c1c1c;">CALENDAR MONTH</div>
<div class="t" style="left:675.30px;top:165.98px;font-size:22px;line-height:22px;color:#1c1c1c;letter-spacing:0.500px;-webkit-text-stroke:0.45px #1c1c1c;">Sep 2025</div>
<div class="t" style="left:867.80px;top:154.60px;font-size:21.5px;line-height:21.5px;color:#1c1c1c;letter-spacing:1.156px;">Operators:</div>
<div class="t" style="left:1000.50px;top:157.61px;font-size:17px;line-height:17px;color:#1f6e9c;font-weight:700;">2</div>
<div class="t" style="left:1065.80px;top:154.60px;font-size:21.5px;line-height:21.5px;color:#1c1c1c;letter-spacing:0.550px;">Services:</div>
<div class="t" style="left:1178.80px;top:157.61px;font-size:17px;line-height:17px;color:#1f6e9c;font-weight:700;">2</div>
<div class="t" style="left:2108.70px;top:154.79px;font-size:19.5px;line-height:19.5px;color:#2f49a1;letter-spacing:0.008px;-webkit-text-stroke:0.3px #2f49a1;">Reset filters</div>
<div class="t" style="left:2246.60px;top:154.79px;font-size:19.5px;line-height:19.5px;color:#2f49a1;letter-spacing:0.136px;-webkit-text-stroke:0.3px #2f49a1;">Save filters</div>
<div class="t" style="left:379.00px;top:251.22px;font-size:19px;line-height:19px;color:#1c1c1c;letter-spacing:0.650px;">Table</div>
<div class="t" style="left:471.50px;top:251.22px;font-size:19px;line-height:19px;color:#1c1c1c;letter-spacing:0.825px;">Chart</div>
<div class="t" style="left:2221.50px;top:250.69px;font-size:19.5px;line-height:19.5px;color:#2f49a1;letter-spacing:0.160px;-webkit-text-stroke:0.3px #2f49a1;">Refine page</div>
<div class="t" style="left:360.80px;top:363.50px;font-size:21.5px;line-height:21.5px;color:#1c1c1c;letter-spacing:1.686px;-webkit-text-stroke:0.35px #1c1c1c;">Operator</div>
<div class="t" style="left:882.60px;top:336.52px;font-size:21px;line-height:21px;color:#1c1c1c;letter-spacing:-1.200px;-webkit-text-stroke:0.35px #1c1c1c;">KPI %</div>
<div class="t" style="left:882.60px;top:389.40px;font-size:15px;line-height:15px;color:#1c1c1c;letter-spacing:0.180px;-webkit-text-stroke:0.3px #1c1c1c;">PUNCTUALITY</div>
<div class="t" style="left:1104.40px;top:389.40px;font-size:15px;line-height:15px;color:#1c1c1c;letter-spacing:-0.230px;-webkit-text-stroke:0.3px #1c1c1c;">RELIABILITY</div>
<div class="t" style="left:1307.00px;top:341.78px;font-size:22px;line-height:22px;color:#1c1c1c;letter-spacing:1.313px;-webkit-text-stroke:0.35px #1c1c1c;">On time performance - First stop</div>
<div class="t" style="left:1821.40px;top:341.78px;font-size:22px;line-height:22px;color:#1c1c1c;letter-spacing:1.517px;-webkit-text-stroke:0.35px #1c1c1c;">On time performance - Interim timing points</div>
<div class="t" style="left:1336.60px;top:387.86px;font-size:16px;line-height:16px;color:#1c1c1c;letter-spacing:-0.325px;">Early</div>
<div class="t" style="left:1429.90px;top:387.86px;font-size:16px;line-height:16px;color:#1c1c1c;letter-spacing:0.567px;">On time</div>
<div class="t" style="left:1546.60px;top:387.86px;font-size:16px;line-height:16px;color:#1c1c1c;letter-spacing:-0.300px;">Late</div>
<div class="t" style="left:1635.00px;top:387.86px;font-size:16px;line-height:16px;color:#1c1c1c;letter-spacing:0.609px;">Not detected</div>
<div class="t" style="left:1851.00px;top:387.86px;font-size:16px;line-height:16px;color:#1c1c1c;letter-spacing:-0.325px;">Early</div>
<div class="t" style="left:1944.10px;top:387.86px;font-size:16px;line-height:16px;color:#1c1c1c;letter-spacing:0.567px;">On time</div>
<div class="t" style="left:2061.00px;top:387.86px;font-size:16px;line-height:16px;color:#1c1c1c;letter-spacing:-0.300px;">Late</div>
<div class="t" style="left:2149.60px;top:387.86px;font-size:16px;line-height:16px;color:#1c1c1c;letter-spacing:0.609px;">Not detected</div>
<div class="t" style="left:354.30px;top:473.95px;font-size:20.5px;line-height:20.5px;color:#1c1c1c;letter-spacing:-0.385px;">Eastbrook Bus Company</div>
<div class="t" style="left:913.10px;top:474.91px;font-size:18.3px;line-height:18.3px;color:#1c1c1c;letter-spacing:-0.7px;">95.7%</div>
<div class="t" style="left:1135.00px;top:474.91px;font-size:18.3px;line-height:18.3px;color:#1c1c1c;letter-spacing:-0.7px;">92.7%</div>
<div class="t" style="left:354.30px;top:551.95px;font-size:20.5px;line-height:20.5px;color:#1c1c1c;letter-spacing:-0.584px;">Foxfold Cross Travel</div>
<div class="t" style="left:913.10px;top:552.91px;font-size:18.3px;line-height:18.3px;color:#1c1c1c;letter-spacing:-0.7px;">94.7%</div>
<div class="t" style="left:1135.00px;top:552.91px;font-size:18.3px;line-height:18.3px;color:#1c1c1c;letter-spacing:-0.7px;">86.0%</div>
<div class="t" style="left:354.30px;top:629.95px;font-size:20.5px;line-height:20.5px;color:#1c1c1c;letter-spacing:-0.287px;">Keldpool Transit</div>
<div class="t" style="left:913.10px;top:630.91px;font-size:18.3px;line-height:18.3px;color:#1c1c1c;letter-spacing:-0.7px;">96.4%</div>
<div class="t" style="left:1135.00px;top:630.91px;font-size:18.3px;line-height:18.3px;color:#1c1c1c;letter-spacing:-0.7px;">90.6%</div>
<div class="t" style="left:354.30px;top:707.95px;font-size:20.5px;line-height:20.5px;color:#1c1c1c;letter-spacing:-0.348px;">Moorhall Cross Transit</div>
<div class="t" style="left:913.10px;top:708.91px;font-size:18.3px;line-height:18.3px;color:#1c1c1c;letter-spacing:-0.7px;">94.9%</div>
<div class="t" style="left:1135.00px;top:708.91px;font-size:18.3px;line-height:18.3px;color:#1c1c1c;letter-spacing:-0.7px;">89.8%</div>
<div class="t" style="left:354.30px;top:785.95px;font-size:20.5px;line-height:20.5px;color:#1c1c1c;letter-spacing:-0.483px;">Oulhurst GO Transit</div>
<div class="t" style="left:913.10px;top:786.91px;font-size:18.3px;line-height:18.3px;color:#1c1c1c;letter-spacing:-0.7px;">94.4%</div>
<div class="t" style="left:1135.00px;top:786.91px;font-size:18.3px;line-height:18.3px;color:#1c1c1c;letter-spacing:-0.7px;">88.5%</div>
<div class="t" style="left:354.30px;top:863.95px;font-size:20.5px;line-height:20.5px;color:#1c1c1c;letter-spacing:-0.481px;">Oxley Bus Company</div>
<div class="t" style="left:913.10px;top:864.91px;font-size:18.3px;line-height:18.3px;color:#1c1c1c;letter-spacing:-0.7px;">97.1%</div>
<div class="t" style="left:1135.00px;top:864.91px;font-size:18.3px;line-height:18.3px;color:#1c1c1c;letter-spacing:-0.7px;">94.2%</div>
<div class="t" style="left:354.30px;top:941.95px;font-size:20.5px;line-height:20.5px;color:#1c1c1c;letter-spacing:-0.420px;">Southburgh Buses</div>
<div class="t" style="left:913.10px;top:942.91px;font-size:18.3px;line-height:18.3px;color:#1c1c1c;letter-spacing:-0.7px;">96.6%</div>
<div class="t" style="left:1135.00px;top:942.91px;font-size:18.3px;line-height:18.3px;color:#1c1c1c;letter-spacing:-0.7px;">92.6%</div>
<div class="t" style="left:354.30px;top:1019.95px;font-size:20.5px;line-height:20.5px;color:#1c1c1c;letter-spacing:-0.100px;">Souththwaite Coaches</div>
<div class="t" style="left:913.10px;top:1020.91px;font-size:18.3px;line-height:18.3px;color:#1c1c1c;letter-spacing:-0.7px;">96.3%</div>
<div class="t" style="left:1135.00px;top:1020.91px;font-size:18.3px;line-height:18.3px;color:#1c1c1c;letter-spacing:-0.7px;">92.1%</div>
<div class="t" style="left:354.30px;top:1097.95px;font-size:20.5px;line-height:20.5px;color:#1c1c1c;letter-spacing:-0.385px;">Upper Langmouth Buses</div>
<div class="t" style="left:913.10px;top:1098.91px;font-size:18.3px;line-height:18.3px;color:#1c1c1c;letter-spacing:-0.7px;">94.0%</div>
<div class="t" style="left:1135.00px;top:1098.91px;font-size:18.3px;line-height:18.3px;color:#1c1c1c;letter-spacing:-0.7px;">89.0%</div>
<div class="t" style="left:354.30px;top:1175.95px;font-size:20.5px;line-height:20.5px;color:#1c1c1c;letter-spacing:-0.242px;">Woolfold Bus Company</div>
<div class="t" style="left:913.10px;top:1176.91px;font-size:18.3px;line-height:18.3px;color:#1c1c1c;letter-spacing:-0.7px;">93.9%</div>
<div class="t" style="left:1135.00px;top:1176.91px;font-size:18.3px;line-height:18.3px;color:#1c1c1c;letter-spacing:-0.7px;">89.6%</div>
</div></div>
<div class="b" style="left:0px;top:237px;width:96px;height:96px;border-radius:50%;background:#ea9b3b;"></div>
<div class="b" style="left:90px;top:283px;width:153px;height:4px;border-radius:2px;background:#ea9b3b;"></div>
<svg class="abs" style="left:0;top:0" width="100" height="340" viewBox="0 0 100 340"><polygon points="53,266.8 53,301.6 45.9,301.6 45.9,275 37.9,277.9 37.9,272.2" fill="#fff"/></svg>
</body></html>
